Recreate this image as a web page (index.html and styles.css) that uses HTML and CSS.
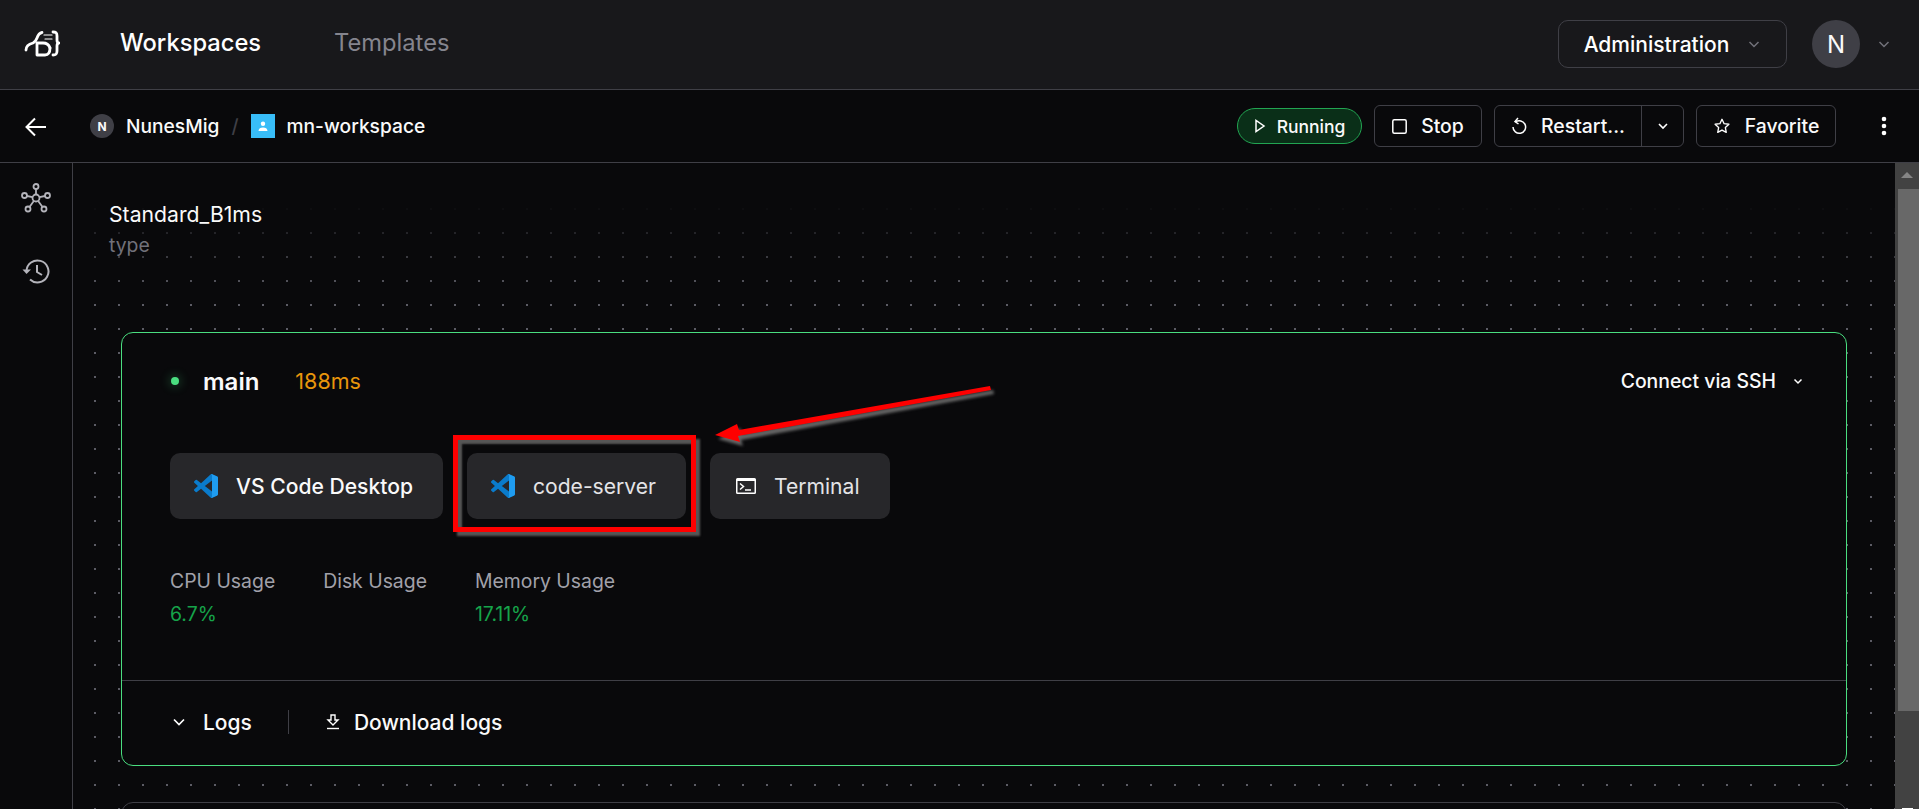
FILE: index.html
```html
<!DOCTYPE html>
<html lang="en">
<head>
    <meta charset="UTF-8">
    <meta name="viewport" content="width=device-width, initial-scale=1.0">
    <title>mn-workspace</title>
    <link rel="stylesheet" href="styles.css">
</head>
<body>
    <svg class="defs" width="0" height="0">
        <symbol id="vscode" viewBox="0 0 24 24">
            <path fill="#0a7bcb" d="M23.15 2.587L18.21.21a1.494 1.494 0 0 0-1.705.29l-9.46 8.63-4.12-3.128a.999.999 0 0 0-1.276.057L.327 7.261A1 1 0 0 0 .326 8.74L3.899 12 .326 15.26a1 1 0 0 0 .001 1.479L1.65 17.94a.999.999 0 0 0 1.276.057l4.12-3.128 9.46 8.63a1.492 1.492 0 0 0 1.704.29l4.942-2.377A1.5 1.5 0 0 0 24 20.06V3.939a1.5 1.5 0 0 0-.85-1.352zm-5.146 14.861L10.826 12l7.178-5.448v10.896z"/>
            <path fill="#1f9cf0" d="M17 .15a1.5 1.5 0 0 1 1.21.06l4.94 2.38A1.5 1.5 0 0 1 24 3.94v16.12a1.5 1.5 0 0 1-.85 1.35l-4.94 2.38a1.5 1.5 0 0 1-1.21.06c.6-.2 1-.7 1-1.4V1.55c0-.7-.4-1.2-1-1.4z"/>
        </symbol>
    </svg>

    <header class="topbar">
        <svg class="logo" width="38" height="30" viewBox="0 0 38 30" fill="none" stroke="#fff" stroke-width="2.800" stroke-linecap="round" stroke-linejoin="round">
            <path d="M4 21c0-4 3-6 7-7 2-1 3-2 4-5 1-3 2-5 5-5.500"/>
            <path d="M15 14h6c4 0 6 2 7 5"/>
            <path d="M15 15v11h8c4 0 5-3 5-7"/>
            <path d="M31 3c3 0 4 1 4 4v4c0 2 .5 3 2 3-1.500 0-2 1-2 3v5c0 3-1 4-4 4"/>
            <path d="M22 6h8M23 10h7" stroke-width="1.200"/>
        </svg>
        <nav class="nav">
            <a class="nav-link active">Workspaces</a>
            <a class="nav-link">Templates</a>
        </nav>
        <div class="topbar-right">
            <button class="admin-btn">Administration
                <svg width="14" height="14" viewBox="0 0 14 14" fill="none" stroke="#71717a" stroke-width="1.500"><path d="M2.500 5l4.500 4.500L11.500 5"/></svg>
            </button>
            <div class="avatar">N</div>
            <svg class="avatar-chevron" width="14" height="14" viewBox="0 0 14 14" fill="none" stroke="#71717a" stroke-width="1.500"><path d="M2.500 5l4.500 4.500L11.500 5"/></svg>
        </div>
    </header>

    <div class="subbar">
        <svg class="back" width="24" height="24" viewBox="0 0 24 24" fill="none" stroke="#fff" stroke-width="2"><path d="M22 13H3M11 4.500L2.500 13l8.500 8.500"/></svg>
        <div class="crumbs">
            <span class="crumb-avatar">N</span>
            <span>NunesMig</span>
            <span class="crumb-sep">/</span>
            <span class="crumb-icon">
                <svg width="12" height="12" viewBox="0 0 12 12" fill="#fff"><circle cx="6" cy="3.800" r="2.200"/><path d="M1.500 11c0-2.400 2-3.500 4.500-3.500s4.500 1.100 4.500 3.500z"/></svg>
            </span>
            <span>mn-workspace</span>
        </div>
        <div class="actions">
            <span class="status">
                <svg width="12" height="14" viewBox="0 0 12 14" fill="none" stroke="#fff" stroke-width="1.500"><path d="M2 1.500v11l8-5.500z"/></svg>
                Running
            </span>
            <button class="btn btn-stop">
                <svg width="15" height="15" viewBox="0 0 15 15" fill="none" stroke="#fff" stroke-width="1.500"><rect x=".8" y=".8" width="13.400" height="13.400" rx="1.500"/></svg>
                Stop
            </button>
            <div class="btn-split">
                <button class="btn-part">
                    <svg width="16" height="18" viewBox="0 0 16 18" fill="none" stroke="#fff" stroke-width="1.500"><path d="M4.500 5a6.300 6.300 0 1 1-2.500 5"/><path d="M7 1L4 4.500 7.500 7"/></svg>
                    Restart...
                </button>
                <button class="btn-caret">
                    <svg width="12" height="12" viewBox="0 0 12 12" fill="none" stroke="#fff" stroke-width="1.600"><path d="M2 4l4 4 4-4"/></svg>
                </button>
            </div>
            <button class="btn btn-fav">
                <svg width="18" height="18" viewBox="0 0 24 24" fill="none" stroke="#fff" stroke-width="1.800" stroke-linejoin="round"><path d="M12 3l2.800 5.900 6.400.8-4.700 4.400 1.200 6.400L12 17.400l-5.700 3.100 1.200-6.400-4.700-4.400 6.400-.8z"/></svg>
                Favorite
            </button>
            <svg class="kebab" width="6" height="24" viewBox="0 0 6 24" fill="#fff"><circle cx="3" cy="5" r="2.300"/><circle cx="3" cy="12" r="2.300"/><circle cx="3" cy="19" r="2.300"/></svg>
        </div>
    </div>

    <div class="main">
        <aside class="sidebar">
            <svg width="32" height="30" viewBox="0 0 32 30" fill="none" stroke="#b4b4bb" stroke-width="1.800">
                <circle cx="16" cy="15" r="3.500"/>
                <circle cx="16" cy="3.500" r="2.500"/>
                <circle cx="4.500" cy="12.500" r="2.500"/>
                <circle cx="27.500" cy="12.500" r="2.500"/>
                <circle cx="8" cy="26" r="2.500"/>
                <circle cx="24" cy="26" r="2.500"/>
                <path d="M16 6v5.500M7 13l5.500 1.200M25 13l-5.500 1.200M9.500 24l4.500-6.200M22.500 24L18 17.800"/>
            </svg>
            <svg width="28" height="26" viewBox="0 0 28 26" fill="none" stroke="#b4b4bb" stroke-width="2">
                <path d="M4.500 13a11 11 0 1 1 3.500 8.500"/>
                <path d="M.5 11.500l4 4.500 4.500-4.500" fill="#b4b4bb" stroke="none"/>
                <path d="M15 7v7l5 3"/>
            </svg>
        </aside>

        <div class="content">
            <div class="meta">
                <div class="meta-value">Standard_B1ms</div>
                <div class="meta-label">type</div>
            </div>

            <section class="card card-on">
                <div class="card-body">
                    <div class="agent-row">
                        <span class="agent-dot"></span>
                        <span class="agent-name">main</span>
                        <span class="agent-latency">188ms</span>
                        <span class="ssh">Connect via SSH
                            <svg width="12" height="12" viewBox="0 0 12 12" fill="none" stroke="#fff" stroke-width="1.500"><path d="M2.500 4.500L6 8l3.500-3.500"/></svg>
                        </span>
                    </div>
                    <div class="apps">
                        <button class="app"><svg width="24" height="24"><use href="#vscode"/></svg>VS Code Desktop</button>
                        <button class="app app-dim"><svg width="24" height="24"><use href="#vscode"/></svg>code-server</button>
                        <button class="app app-dim">
                            <svg class="term-icon" width="20" height="16" viewBox="0 0 20 16"><path fill="#fff" fill-rule="evenodd" d="M1.500 0h17A1.500 1.500 0 0 1 20 1.500v13a1.500 1.500 0 0 1-1.500 1.500h-17A1.500 1.500 0 0 1 0 14.500v-13A1.500 1.500 0 0 1 1.500 0zM1.500 3v11.500h17V3z"/><path fill="none" stroke="#fff" stroke-width="1.500" d="M4 5.500L7.500 8.500 4 11.500M9 12h6"/></svg>
                            Terminal
                        </button>
                    </div>
                    <div class="metrics">
                        <div class="metric">
                            <div class="metric-label">CPU Usage</div>
                            <div class="metric-value">6.7%</div>
                        </div>
                        <div class="metric">
                            <div class="metric-label">Disk Usage</div>
                        </div>
                        <div class="metric">
                            <div class="metric-label">Memory Usage</div>
                            <div class="metric-value">17.11%</div>
                        </div>
                    </div>
                </div>
                <div class="logs-row">
                    <span class="logs-toggle">
                        <svg width="14" height="14" viewBox="0 0 14 14" fill="none" stroke="#fff" stroke-width="1.700"><path d="M2 4.500L7 9.500l5-5"/></svg>
                        Logs
                    </span>
                    <span class="logs-sep"></span>
                    <span class="logs-download">
                        <svg width="14" height="16" viewBox="0 0 14 16" fill="none" stroke="#fff" stroke-width="1.400"><path d="M5 1h4v5h3L7 11 2 6h3z"/><path d="M1 14.500h12"/></svg>
                        Download logs
                    </span>
                </div>
            </section>

            <section class="card"></section>
        </div>

        <div class="scrollbar">
            <div class="scroll-up"></div>
            <div class="scroll-thumb"></div>
            <div class="scroll-tip"></div>
        </div>
    </div>

    <!-- red markup drawn over the screenshot -->
    <div class="mark-box"></div>
    <svg class="mark-arrow" width="1919" height="809" viewBox="0 0 1919 809">
        <path fill="#ff0000" d="M990 386l1 4-253 46 2 6-25-7 22-11 2 6z"/>
    </svg>
</body>
</html>
```

FILE: styles.css
```css
* {
    box-sizing: border-box;
}
html, body {
    height: 100%;
}
body {
    margin: 0;
    background: #09090b;
    color: #fafafa;
    font-family: Inter, "Liberation Sans", sans-serif;
    font-size: 19.4px;
    overflow: hidden;
    display: flex;
    flex-direction: column;
    position: relative;
}
button {
    font: inherit;
    color: inherit;
    background: none;
    border: none;
}
.defs {
    position: absolute;
}

/* top navigation */
.topbar {
    height: 90px;
    flex: none;
    display: flex;
    align-items: center;
    padding: 0 28px 1px 22px;
    background: #18181b;
    border-bottom: 1px solid #3f3f46;
}
.logo {
    flex: none;
}
.nav {
    display: flex;
    gap: 73px;
    margin-left: 60px;
    margin-top: -4px;
}
.nav-link {
    font-size: 23.7px;
    color: #85858e;
    font-weight: 400;
}
.nav-link.active {
    color: #fff;
    font-weight: 500;
}
.topbar-right {
    margin-left: auto;
    display: flex;
    align-items: center;
}
.admin-btn {
    width: 229px;
    height: 48px;
    display: flex;
    align-items: center;
    justify-content: center;
    gap: 18px;
    border: 1px solid #3f3f46;
    border-radius: 10px;
    font-size: 21px;
    font-weight: 500;
    color: #fff;
    padding: 0;
}
.avatar {
    width: 48px;
    height: 48px;
    margin-left: 25px;
    border-radius: 50%;
    background: #3f3f46;
    display: flex;
    align-items: center;
    justify-content: center;
    font-size: 24px;
}
.avatar-chevron {
    margin-left: 17px;
}

/* workspace bar */
.subbar {
    height: 73px;
    flex: none;
    display: flex;
    align-items: center;
    padding: 0 32px 0 24px;
    border-bottom: 1px solid #3f3f46;
}
.back {
    flex: none;
}
.crumbs {
    display: flex;
    align-items: center;
    margin-left: 42px;
    font-size: 19.2px;
    font-weight: 500;
}
.crumb-avatar {
    width: 24px;
    height: 24px;
    border-radius: 50%;
    background: #3f3f46;
    font-size: 12px;
    font-weight: 700;
    display: flex;
    align-items: center;
    justify-content: center;
    margin-right: 12px;
}
.crumb-sep {
    color: #3f3f46;
    margin: 0 12px;
}
.crumb-icon {
    width: 24px;
    height: 24px;
    background: #38bdf8;
    display: flex;
    align-items: center;
    justify-content: center;
    margin-right: 12px;
}
.actions {
    margin-left: auto;
    display: flex;
    align-items: center;
    gap: 12px;
}
.status {
    width: 125px;
    height: 36px;
    display: flex;
    align-items: center;
    justify-content: center;
    gap: 11px;
    font-size: 17.5px;
    font-weight: 500;
    border: 1px solid #22a552;
    border-radius: 18px;
    background: #0a2f18;
}
.btn {
    height: 42px;
    padding: 0;
    display: flex;
    align-items: center;
    justify-content: center;
    gap: 14px;
    border: 1px solid #3f3f46;
    border-radius: 6px;
    font-weight: 500;
}
.btn-stop {
    width: 108px;
}
.btn-fav {
    width: 140px;
}
.btn-split {
    height: 42px;
    display: flex;
    border: 1px solid #3f3f46;
    border-radius: 6px;
    font-weight: 500;
}
.btn-part {
    width: 147px;
    display: flex;
    align-items: center;
    justify-content: center;
    gap: 14px;
    padding: 0;
    border-right: 1px solid #3f3f46;
}
.btn-caret {
    width: 41px;
    padding: 0;
    display: flex;
    align-items: center;
    justify-content: center;
}
.kebab {
    margin-left: 33px;
}

/* page body */
.main {
    flex: 1;
    min-height: 0;
    display: flex;
}
.sidebar {
    width: 73px;
    flex: none;
    display: flex;
    flex-direction: column;
    align-items: center;
    gap: 45px;
    padding-top: 20px;
    border-right: 1px solid #3f3f46;
}
.content {
    flex: 1;
    min-width: 0;
    position: relative;
    overflow: hidden;
    padding: 39px 48px 0;
}
.content::before {
    content: "";
    position: absolute;
    inset: 0;
    background-image: radial-gradient(circle, #5c5c65 .8px, transparent 1.1px);
    background-size: 24px 24px;
    background-position: 10px 10px;
    -webkit-mask-image: linear-gradient(to bottom, transparent 40px, #000 130px);
    mask-image: linear-gradient(to bottom, transparent 40px, #000 130px);
}
.meta {
    position: relative;
    margin-left: -12px;
    line-height: 24px;
}
.meta-value {
    font-size: 21.2px;
}
.meta-label {
    margin-top: 7px;
    color: #71717a;
}
.card {
    position: relative;
    min-height: 434px;
    background: #09090b;
    border: 1px solid #3f3f46;
    border-radius: 12px;
    margin-bottom: 36px;
}
.card-on {
    margin-top: 75px;
    border-color: #4ade80;
}
.card-body {
    padding: 30px 48px 54px;
    border-bottom: 1px solid #3f3f46;
}
.agent-row {
    height: 36px;
    display: flex;
    align-items: center;
}
.agent-dot {
    width: 8px;
    height: 8px;
    margin-left: 1px;
    border-radius: 50%;
    background: #4ade80;
    box-shadow: 0 0 10px 3px rgba(74, 222, 128, 0.18);
}
.agent-name {
    margin-left: 24px;
    font-size: 24px;
    font-weight: 600;
}
.agent-latency {
    margin-left: 36px;
    color: #e8960c;
    font-size: 21.5px;
}
.ssh {
    margin-left: auto;
    margin-right: -6px;
    display: flex;
    align-items: center;
    gap: 16px;
    font-weight: 500;
}
.apps {
    display: flex;
    gap: 24px;
    margin-top: 54px;
}
.app {
    height: 66px;
    display: flex;
    align-items: center;
    gap: 18px;
    padding: 0 30px 0 24px;
    background: #27272a;
    border-radius: 10px;
    font-size: 21.1px;
    font-weight: 500;
}
.app-dim {
    color: #e4e4e7;
    font-weight: 400;
}
.term-icon {
    margin-left: 2px;
}
.metrics {
    display: flex;
    gap: 48px;
    margin-top: 50px;
}
.metric {
    line-height: 24px;
}
.metric-label {
    color: #a1a1aa;
}
.metric-value {
    margin-top: 9px;
    color: #16a34a;
}
.logs-row {
    height: 84px;
    display: flex;
    align-items: center;
    padding: 0 0 2px 50px;
    font-size: 21px;
    font-weight: 500;
}
.logs-toggle {
    display: flex;
    align-items: center;
    gap: 17px;
}
.logs-download {
    display: flex;
    align-items: center;
    gap: 14px;
}
.logs-sep {
    width: 1px;
    height: 24px;
    margin: 0 37px 0 36px;
    background: #3f3f46;
}

/* fake scrollbar from the screenshot */
.scrollbar {
    width: 24px;
    flex: none;
    display: flex;
    flex-direction: column;
    align-items: flex-end;
    background: #424242;
}
.scroll-up {
    width: 24px;
    height: 26px;
    position: relative;
}
.scroll-up::after {
    content: "";
    position: absolute;
    left: 6px;
    top: 9px;
    border: 6px solid transparent;
    border-top: 0;
    border-bottom: 6px solid #858585;
}
.scroll-thumb {
    width: 21px;
    height: 522px;
    background: #686868;
}
.scroll-tip {
    width: 11px;
    height: 1px;
    margin: auto 6px 0 0;
    background: #fff;
}

/* red markup */
.mark-box {
    position: absolute;
    left: 453px;
    top: 435px;
    width: 243px;
    height: 97px;
    border: 5px solid #ff0000;
    box-shadow: 4px 4px 2px #565656, inset 4px 4px 2px #565656;
}
.mark-arrow {
    position: absolute;
    left: 0;
    top: 0;
    filter: drop-shadow(3px 4px 1.5px #666);
}
```
